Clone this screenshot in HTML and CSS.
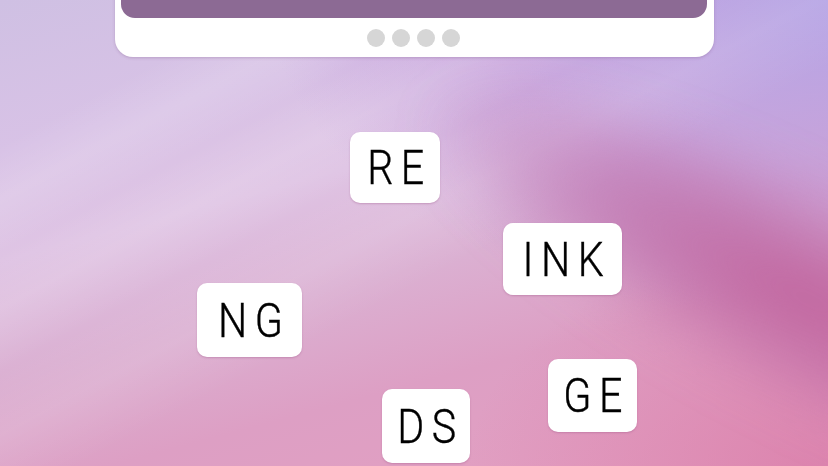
FILE: index.html
```html
<!DOCTYPE html>
<html>
<head>
<meta charset="utf-8">
<link rel="stylesheet" href="styles.css">
</head>
<body>
<div class="scene">
  <div class="card">
    <div class="screen"></div>
    <div class="dots">
      <span class="dot"></span><span class="dot"></span><span class="dot"></span><span class="dot"></span>
    </div>
  </div>
  <div class="tile tile-re"><span class="word">RE</span></div>
  <div class="tile tile-ink"><span class="word">INK</span></div>
  <div class="tile tile-ng"><span class="word">NG</span></div>
  <div class="tile tile-ge"><span class="word">GE</span></div>
  <div class="tile tile-ds"><span class="word">DS</span></div>
</div>
</body>
</html>
```

FILE: styles.css
```css
html, body {
  margin: 0;
  padding: 0;
}
body {
  width: 828px;
  height: 466px;
  overflow: hidden;
  font-family: Roboto, "Liberation Sans", sans-serif;
}
.scene {
  position: relative;
  width: 828px;
  height: 466px;
  overflow: hidden;
  background:
    linear-gradient(152deg, rgba(255,255,255,0) 16%, rgba(255,255,255,0.14) 22%, rgba(255,255,255,0) 28%, rgba(255,255,255,0.12) 34%, rgba(255,255,255,0) 41%, rgba(255,255,255,0.10) 48%, rgba(255,255,255,0) 56%),
    radial-gradient(ellipse 560px 320px at 828px 0px, rgba(178,160,228,0.95), rgba(190,150,218,0.55) 60%, rgba(190,150,218,0) 100%),
    radial-gradient(ellipse 360px 220px at 828px 466px, rgba(216,120,166,0.7), rgba(216,120,166,0) 100%),
    linear-gradient(165deg, #cfc0e3 0%, #d8c2e6 22%, #dfc4e4 38%, #dbb0d2 55%, #dd9fc4 72%, #e59fc0 100%);
}
.scene::before {
  content: "";
  position: absolute;
  left: 380px;
  top: 190px;
  width: 860px;
  height: 220px;
  border-radius: 50%;
  background: radial-gradient(closest-side, rgba(192, 98, 156, 0.95), rgba(188, 104, 164, 0.6) 50%, rgba(188, 104, 164, 0) 100%);
  transform: rotate(27deg);
  transform-origin: 50% 50%;
  filter: blur(24px);
}
.card {
  position: relative;
  width: 599px;
  margin: -60px auto 0;
  padding: 0 7px 10px 6px;
  box-sizing: border-box;
  background: #ffffff;
  border-radius: 0 0 18px 18px;
  box-shadow: 0 1px 3px rgba(120, 80, 130, 0.3);
}
.screen {
  height: 78px;
  background: #8c6a94;
  border-radius: 0 0 14px 14px;
}
.dots {
  display: flex;
  justify-content: center;
  gap: 7px;
  margin-top: 11px;
}
.dot {
  width: 18px;
  height: 18px;
  border-radius: 50%;
  background: #d6d6d6;
}
.tile {
  position: absolute;
  display: flex;
  align-items: center;
  justify-content: center;
  background: #ffffff;
  border-radius: 10px;
  box-shadow: 0 1px 2px rgba(150, 80, 130, 0.35);
}
.word {
  display: inline-block;
  font-size: 49px;
  font-weight: 300;
  line-height: 1;
  color: #000000;
  letter-spacing: 9px;
  margin-right: -9px;
  transform: scaleX(0.84);
  -webkit-text-stroke: 0.4px #000;
}
.tile-re { left: 350px; top: 132px; width: 90px; height: 71px; }
.tile-ink { left: 503px; top: 223px; width: 119px; height: 72px; }
.tile-ng { left: 197px; top: 283px; width: 105px; height: 74px; }
.tile-ge { left: 548px; top: 359px; width: 89px; height: 73px; }
.tile-ds { left: 382px; top: 389px; width: 88px; height: 74px; }
```
